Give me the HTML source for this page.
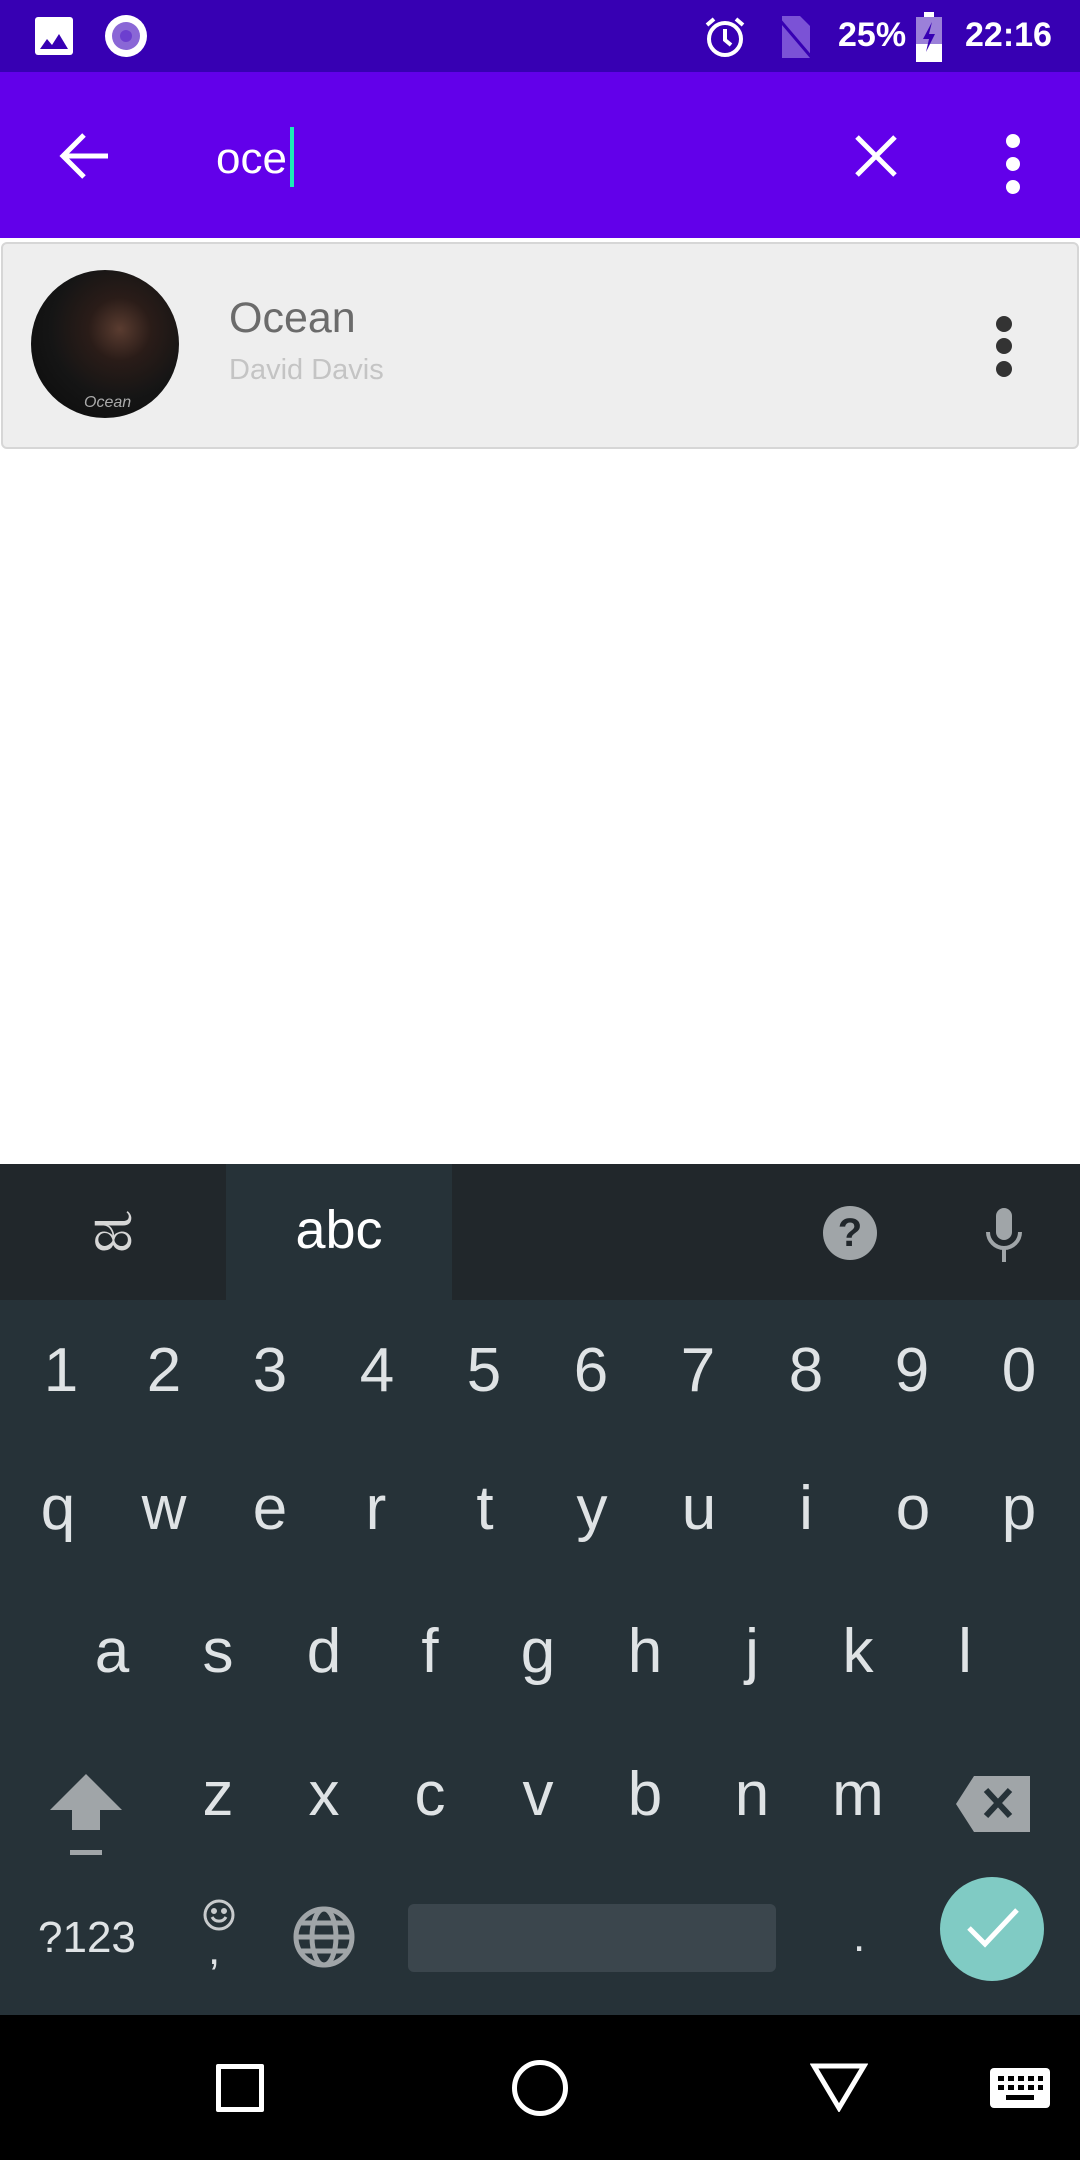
<!DOCTYPE html>
<html><head><meta charset="utf-8">
<style>
*{margin:0;padding:0;box-sizing:border-box}
body{width:1080px;height:2160px;overflow:hidden;background:#fff;font-family:"Liberation Sans","Noto Sans CJK SC",sans-serif;position:relative}
.a{position:absolute}
.k{position:absolute;width:108px;text-align:center;color:#dfe3e5;font-size:62px;line-height:1;transform:translateX(-54px)}
</style></head><body>
<div class="a" style="left:0;top:0;width:1080px;height:72px;background:#3700b3"></div>
<svg class="a" style="left:34px;top:16px" width="40" height="40" viewBox="0 0 40 40"><rect x="1" y="1" width="38" height="38" rx="3" fill="#fff"/><path d="M6 33 L13 23 L18 29 L25 18 L34 33 Z" fill="#3700b3"/></svg>
<svg class="a" style="left:104px;top:14px" width="44" height="44" viewBox="0 0 44 44"><circle cx="22" cy="22" r="21" fill="#fff"/><circle cx="22" cy="22" r="14" fill="#8a67d6"/><circle cx="22" cy="22" r="6" fill="#6c3fcf"/></svg>
<svg class="a" style="left:702px;top:14px" width="46" height="46" viewBox="0 0 46 46" fill="none" stroke="#fff" stroke-width="4"><circle cx="23" cy="25" r="16"/><path d="M23 15v11l6 5M5 11l7-6M41 11l-7-6"/></svg>
<svg class="a" style="left:774px;top:14px" width="40" height="46" viewBox="0 0 40 46"><path d="M8 2h18l10 10v32H8z" fill="#7b52d6"/><path d="M4 4 L38 44" stroke="#3700b3" stroke-width="3"/></svg>
<div class="a" style="left:838px;top:16px;color:#fff;font-size:34px;font-weight:bold">25%</div>
<svg class="a" style="left:916px;top:12px" width="26" height="50" viewBox="0 0 26 50"><rect x="8" y="0" width="10" height="5" fill="#fff"/><rect x="0" y="5" width="26" height="45" fill="#fff" opacity=".5"/><rect x="0" y="32" width="26" height="18" fill="#fff"/><path d="M16 10 L7 27 H13 L10 40 L19 22 H13 Z" fill="#3700b3"/></svg>
<div class="a" style="left:965px;top:16px;color:#fff;font-size:34px;font-weight:bold">22:16</div>

<div class="a" style="left:0;top:72px;width:1080px;height:166px;background:#6200ea"></div>
<svg class="a" style="left:58px;top:132px" width="52" height="48" viewBox="0 0 52 48" fill="none" stroke="#fff" stroke-width="5"><path d="M50 24H6M26 3L5 24l21 21"/></svg>
<div class="a" style="left:216px;top:134px;color:#fff;font-size:44px">oce</div>
<div class="a" style="left:290px;top:127px;width:4px;height:60px;background:#1de9b6"></div>
<svg class="a" style="left:854px;top:134px" width="44" height="44" viewBox="0 0 44 44" stroke="#fff" stroke-width="5"><path d="M3 3L41 41M41 3L3 41"/></svg>
<div class="a" style="left:1006px;top:134px;width:14px;height:14px;border-radius:50%;background:#fff"></div>
<div class="a" style="left:1006px;top:157px;width:14px;height:14px;border-radius:50%;background:#fff"></div>
<div class="a" style="left:1006px;top:180px;width:14px;height:14px;border-radius:50%;background:#fff"></div>

<div class="a" style="left:1px;top:242px;width:1078px;height:207px;background:#eeeeee;border:2px solid #d6d6d6;border-radius:6px"></div>
<div class="a" style="left:31px;top:270px;width:148px;height:148px;border-radius:50%;background:radial-gradient(circle at 60% 40%,#5a3c30 0,#2a1c18 25%,#151515 55%,#0a0a0a 100%)"></div>
<div class="a" style="left:84px;top:394px;color:#aaa;font-size:16px;font-style:italic">Ocean</div>
<div class="a" style="left:229px;top:294px;color:#6b6b6b;font-size:43px">Ocean</div>
<div class="a" style="left:229px;top:354px;color:#c4c4c4;font-size:29px">David Davis</div>
<div class="a" style="left:996px;top:316px;width:16px;height:16px;border-radius:50%;background:#333"></div>
<div class="a" style="left:996px;top:338px;width:16px;height:16px;border-radius:50%;background:#333"></div>
<div class="a" style="left:996px;top:361px;width:16px;height:16px;border-radius:50%;background:#333"></div>

<div class="a" style="left:0;top:1164px;width:1080px;height:136px;background:#21272b"></div>
<div class="a" style="left:226px;top:1164px;width:226px;height:136px;background:#263238"></div>
<div class="a" style="left:0;top:1200px;width:226px;text-align:center;color:#d6d6d6;font-size:60px;line-height:1">ಹ</div>
<div class="a" style="left:226px;top:1203px;width:226px;text-align:center;color:#fff;font-size:54px;line-height:1">abc</div>
<div class="a" style="left:823px;top:1206px;width:54px;height:54px;border-radius:50%;background:#a0a5a8;color:#21272b;font-size:40px;font-weight:bold;text-align:center;line-height:54px">?</div>
<svg class="a" style="left:982px;top:1208px" width="44" height="56" viewBox="0 0 44 56"><rect x="14" y="0" width="16" height="32" rx="8" fill="#a0a5a8"/><path d="M6 24a16 16 0 0 0 32 0M22 40v14" stroke="#a0a5a8" stroke-width="4" fill="none"/></svg>
<div class="a" style="left:0;top:1300px;width:1080px;height:715px;background:#263238"></div>

<div class="k" style="left:61px;top:1340px">1</div><div class="k" style="left:164px;top:1340px">2</div><div class="k" style="left:270px;top:1340px">3</div><div class="k" style="left:377px;top:1340px">4</div><div class="k" style="left:484px;top:1340px">5</div><div class="k" style="left:591px;top:1340px">6</div><div class="k" style="left:698px;top:1340px">7</div><div class="k" style="left:806px;top:1340px">8</div><div class="k" style="left:912px;top:1340px">9</div><div class="k" style="left:1019px;top:1340px">0</div>
<div class="k" style="left:58px;top:1478px">q</div><div class="k" style="left:164px;top:1478px">w</div><div class="k" style="left:270px;top:1478px">e</div><div class="k" style="left:376px;top:1478px">r</div><div class="k" style="left:485px;top:1478px">t</div><div class="k" style="left:592px;top:1478px">y</div><div class="k" style="left:699px;top:1478px">u</div><div class="k" style="left:806px;top:1478px">i</div><div class="k" style="left:913px;top:1478px">o</div><div class="k" style="left:1019px;top:1478px">p</div>
<div class="k" style="left:112px;top:1621px">a</div><div class="k" style="left:218px;top:1621px">s</div><div class="k" style="left:324px;top:1621px">d</div><div class="k" style="left:430px;top:1621px">f</div><div class="k" style="left:538px;top:1621px">g</div><div class="k" style="left:645px;top:1621px">h</div><div class="k" style="left:752px;top:1621px">j</div><div class="k" style="left:858px;top:1621px">k</div><div class="k" style="left:965px;top:1621px">l</div>
<div class="k" style="left:218px;top:1764px">z</div><div class="k" style="left:324px;top:1764px">x</div><div class="k" style="left:430px;top:1764px">c</div><div class="k" style="left:538px;top:1764px">v</div><div class="k" style="left:645px;top:1764px">b</div><div class="k" style="left:752px;top:1764px">n</div><div class="k" style="left:858px;top:1764px">m</div>
<svg class="a" style="left:50px;top:1774px" width="72" height="84" viewBox="0 0 72 84" fill="#a0a5a8"><path d="M36 0L0 36h22v20h28V36h22z"/><rect x="20" y="76" width="32" height="5"/></svg>
<svg class="a" style="left:956px;top:1776px" width="76" height="56" viewBox="0 0 76 56"><path d="M18 0H74V56H18L0 28Z" fill="#a0a5a8"/><path d="M30 14L54 40M54 14L30 40" stroke="#263238" stroke-width="6"/></svg>
<div class="a" style="left:38px;top:1913px;color:#dfe3e5;font-size:44px">?123</div>
<svg class="a" style="left:202px;top:1898px" width="34" height="34" viewBox="0 0 34 34" fill="none" stroke="#c8cbcd" stroke-width="3"><circle cx="17" cy="17" r="14"/><path d="M10 19a8 8 0 0 0 14 0"/><circle cx="12" cy="13" r="1.5" fill="#c8cbcd"/><circle cx="22" cy="13" r="1.5" fill="#c8cbcd"/></svg>
<div class="a" style="left:208px;top:1925px;color:#dfe3e5;font-size:44px">,</div>
<svg class="a" style="left:293px;top:1906px" width="62" height="62" viewBox="0 0 62 62" fill="none" stroke="#a0a5a8" stroke-width="5"><circle cx="31" cy="31" r="28"/><ellipse cx="31" cy="31" rx="12" ry="28"/><path d="M3 31h56M8 17h46M8 45h46"/></svg>
<div class="a" style="left:408px;top:1904px;width:368px;height:68px;border-radius:6px;background:#3b464d"></div>
<div class="a" style="left:853px;top:1912px;color:#dfe3e5;font-size:44px">.</div>
<div class="a" style="left:940px;top:1877px;width:104px;height:104px;border-radius:50%;background:#80cbc4"></div>
<svg class="a" style="left:966px;top:1906px" width="54" height="44" viewBox="0 0 54 44" fill="none" stroke="#fff" stroke-width="5"><path d="M3 22l16 16L51 4"/></svg>

<div class="a" style="left:0;top:2015px;width:1080px;height:145px;background:#000"></div>
<div class="a" style="left:216px;top:2064px;width:48px;height:48px;border:5px solid #fff;border-radius:2px"></div>
<div class="a" style="left:512px;top:2060px;width:56px;height:56px;border:5px solid #fff;border-radius:50%"></div>
<svg class="a" style="left:810px;top:2062px" width="58" height="50" viewBox="0 0 58 50" fill="none" stroke="#fff" stroke-width="5"><path d="M4 4h50L29 46z"/></svg>
<svg class="a" style="left:990px;top:2068px" width="60" height="40" viewBox="0 0 60 40"><rect width="60" height="40" rx="4" fill="#fff"/><g fill="#000"><rect x="8" y="8" width="6" height="5"/><rect x="18" y="8" width="6" height="5"/><rect x="28" y="8" width="6" height="5"/><rect x="38" y="8" width="6" height="5"/><rect x="48" y="8" width="5" height="5"/><rect x="8" y="17" width="6" height="5"/><rect x="18" y="17" width="6" height="5"/><rect x="28" y="17" width="6" height="5"/><rect x="38" y="17" width="6" height="5"/><rect x="48" y="17" width="5" height="5"/><rect x="16" y="27" width="28" height="5"/></g></svg>
</body></html>
